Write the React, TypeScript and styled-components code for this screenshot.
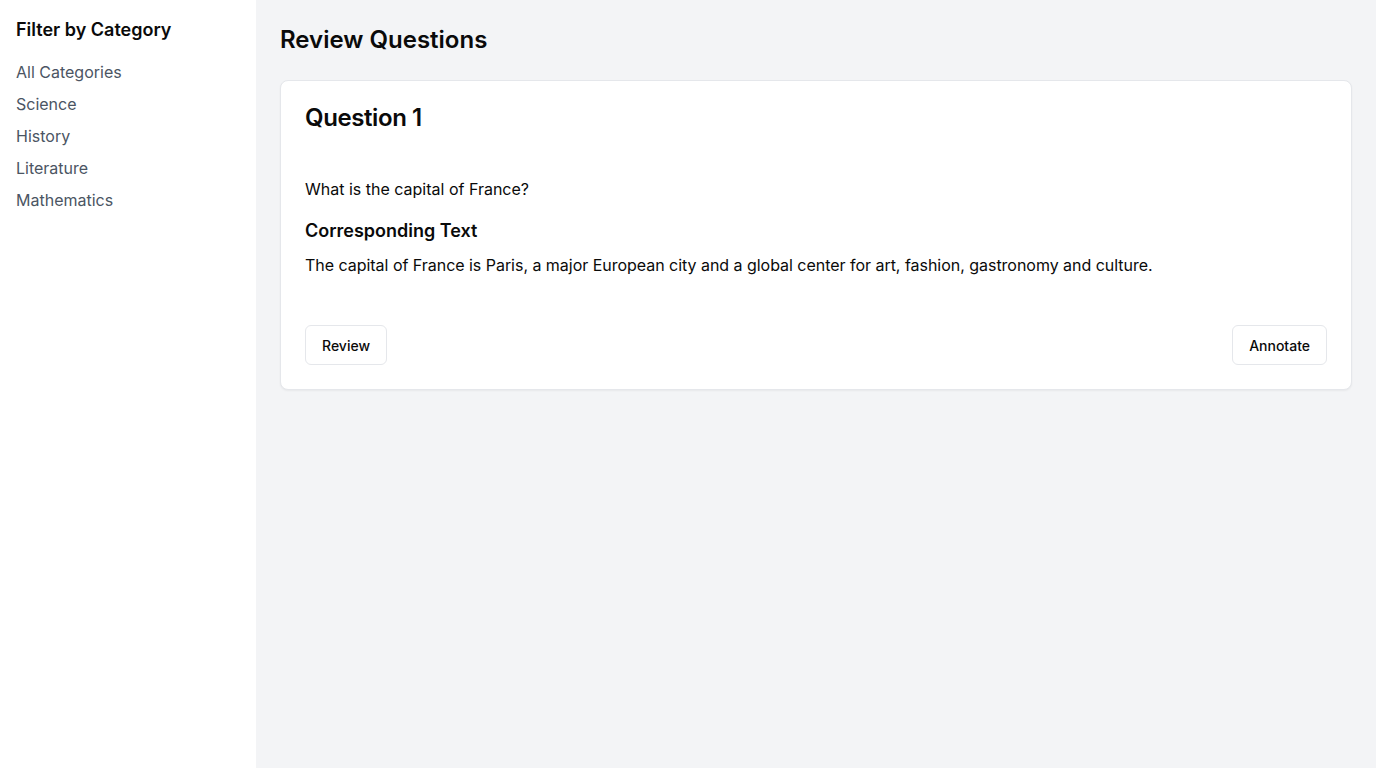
import React from "react";
import styled, { createGlobalStyle } from "styled-components";

const Global = createGlobalStyle`
  * { box-sizing: border-box; }
  html, body { margin: 0; padding: 0; }
  body {
    font-family: Inter, "Noto Sans", "Liberation Sans", sans-serif;
    color: #0a0a0a;
    -webkit-font-smoothing: antialiased;
  }
`;

const Layout = styled.div`
  display: flex;
  min-height: 100vh;
  width: 100%;
`;

const Sidebar = styled.aside`
  width: 256px;
  flex-shrink: 0;
  background: #ffffff;
  padding: 16px;
`;

const SideTitle = styled.h2`
  margin: 0 0 16px;
  font-size: 18px;
  line-height: 28px;
  font-weight: 600;
  color: #0a0a0a;
`;

const CatList = styled.ul`
  list-style: none;
  margin: 0;
  padding: 0;
  display: flex;
  flex-direction: column;
  gap: 8px;
`;

const CatItem = styled.li`
  font-size: 16px;
  line-height: 24px;
  color: #4b5563;
  cursor: pointer;
`;

const Main = styled.main`
  flex: 1;
  background: #f3f4f6;
  padding: 24px;
`;

const PageTitle = styled.h1`
  margin: 0 0 24px;
  font-size: 24px;
  line-height: 32px;
  font-weight: 600;
  color: #0a0a0a;
`;

const Card = styled.div`
  background: #ffffff;
  border: 1px solid #e5e7eb;
  border-radius: 8px;
  box-shadow: 0 1px 2px rgba(0, 0, 0, 0.05);
`;

const CardHeader = styled.div`
  padding: 21px 24px 16px;
`;

const CardTitle = styled.h3`
  margin: 0;
  font-size: 24px;
  line-height: 32px;
  font-weight: 600;
  letter-spacing: -0.4px;
`;

const CardContent = styled.div`
  padding: 27px 24px 48px;
`;

const Question = styled.p`
  margin: 0 0 16px;
  font-size: 16px;
  line-height: 24px;
`;

const SubTitle = styled.h4`
  margin: 0 0 8px;
  font-size: 18px;
  line-height: 28px;
  font-weight: 600;
`;

const Body = styled.p`
  margin: 0;
  font-size: 16px;
  line-height: 24px;
  letter-spacing: -0.03px;
`;

const CardFooter = styled.div`
  display: flex;
  align-items: center;
  justify-content: space-between;
  padding: 0 24px 24px;
`;

const Button = styled.button`
  height: 40px;
  padding: 0 16px;
  border: 1px solid #e5e7eb;
  border-radius: 6px;
  background: #ffffff;
  font-family: inherit;
  font-size: 14px;
  font-weight: 500;
  color: #0a0a0a;
  cursor: pointer;
`;

const categories = ["All Categories", "Science", "History", "Literature", "Mathematics"];

export default function App() {
  return (
    <>
      <Global />
      <Layout>
        <Sidebar>
          <SideTitle>Filter by Category</SideTitle>
          <CatList>
            {categories.map((c) => (
              <CatItem key={c}>{c}</CatItem>
            ))}
          </CatList>
        </Sidebar>
        <Main>
          <PageTitle>Review Questions</PageTitle>
          <Card>
            <CardHeader>
              <CardTitle>Question 1</CardTitle>
            </CardHeader>
            <CardContent>
              <Question>What is the capital of France?</Question>
              <SubTitle>Corresponding Text</SubTitle>
              <Body>
                The capital of France is Paris, a major European city and a global center for art, fashion,
                gastronomy and culture.
              </Body>
            </CardContent>
            <CardFooter>
              <Button>Review</Button>
              <Button>Annotate</Button>
            </CardFooter>
          </Card>
        </Main>
      </Layout>
    </>
  );
}
